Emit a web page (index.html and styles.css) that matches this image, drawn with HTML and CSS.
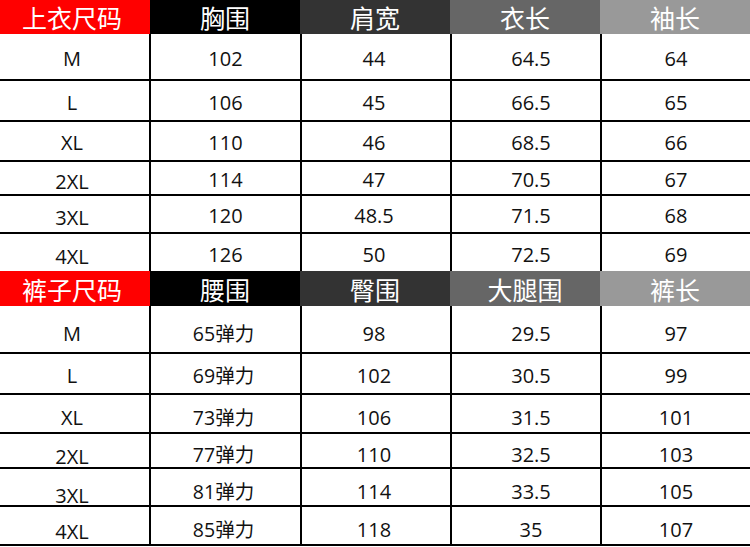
FILE: index.html
```html
<!DOCTYPE html>
<html lang="zh-CN">
<head>
<meta charset="utf-8">
<title>尺码表</title>
<link rel="stylesheet" href="styles.css">
</head>
<body>
<div class="chart">
  <section class="table top">
    <div class="row head">
      <div class="cell c1">上衣尺码</div>
      <div class="cell c2">胸围</div>
      <div class="cell c3">肩宽</div>
      <div class="cell c4">衣长</div>
      <div class="cell c5">袖长</div>
    </div>
    <div class="row data"><div class="cell c1">M</div><div class="cell c2">102</div><div class="cell c3">44</div><div class="cell c4">64.5</div><div class="cell c5">64</div></div>
    <div class="row data"><div class="cell c1">L</div><div class="cell c2">106</div><div class="cell c3">45</div><div class="cell c4">66.5</div><div class="cell c5">65</div></div>
    <div class="row data"><div class="cell c1">XL</div><div class="cell c2">110</div><div class="cell c3">46</div><div class="cell c4">68.5</div><div class="cell c5">66</div></div>
    <div class="row data"><div class="cell c1">2XL</div><div class="cell c2">114</div><div class="cell c3">47</div><div class="cell c4">70.5</div><div class="cell c5">67</div></div>
    <div class="row data"><div class="cell c1">3XL</div><div class="cell c2">120</div><div class="cell c3">48.5</div><div class="cell c4">71.5</div><div class="cell c5">68</div></div>
    <div class="row data"><div class="cell c1">4XL</div><div class="cell c2">126</div><div class="cell c3">50</div><div class="cell c4">72.5</div><div class="cell c5">69</div></div>
  </section>
  <section class="table bottom">
    <div class="row head">
      <div class="cell c1">裤子尺码</div>
      <div class="cell c2">腰围</div>
      <div class="cell c3">臀围</div>
      <div class="cell c4">大腿围</div>
      <div class="cell c5">裤长</div>
    </div>
    <div class="row data"><div class="cell c1">M</div><div class="cell c2">65弹力</div><div class="cell c3">98</div><div class="cell c4">29.5</div><div class="cell c5">97</div></div>
    <div class="row data"><div class="cell c1">L</div><div class="cell c2">69弹力</div><div class="cell c3">102</div><div class="cell c4">30.5</div><div class="cell c5">99</div></div>
    <div class="row data"><div class="cell c1">XL</div><div class="cell c2">73弹力</div><div class="cell c3">106</div><div class="cell c4">31.5</div><div class="cell c5">101</div></div>
    <div class="row data"><div class="cell c1">2XL</div><div class="cell c2">77弹力</div><div class="cell c3">110</div><div class="cell c4">32.5</div><div class="cell c5">103</div></div>
    <div class="row data"><div class="cell c1">3XL</div><div class="cell c2">81弹力</div><div class="cell c3">114</div><div class="cell c4">33.5</div><div class="cell c5">105</div></div>
    <div class="row data"><div class="cell c1">4XL</div><div class="cell c2">85弹力</div><div class="cell c3">118</div><div class="cell c4">35</div><div class="cell c5">107</div></div>
  </section>
</div>
</body>
</html>
```
FILE: styles.css
```css
html, body {
  margin: 0;
  padding: 0;
  background: #fff;
}

.chart {
  width: 750px;
  display: flex;
  flex-direction: column;
  font-family: "Open Sans", "Noto Sans CJK SC", sans-serif;
  color: #111;
}

.table {
  display: flex;
  flex-direction: column;
}

.row {
  display: grid;
  grid-template-columns: repeat(5, 150px);
  box-sizing: border-box;
}

.cell {
  display: flex;
  align-items: center;
  justify-content: center;
  box-sizing: border-box;
  white-space: nowrap;
}

/* header rows */
.head .cell {
  color: #fff;
  font-family: "Noto Sans CJK SC", sans-serif;
  font-size: 25px;
  line-height: 34px;
}
.head .c1 { background: #ff0000; padding-right: 6px; }
.head .c2 { background: #000000; }
.head .c3 { background: #333333; }
.head .c4 { background: #666666; }
.head .c5 { background: #999999; }

.top .head { height: 34px; }
.bottom .head { height: 35px; }

/* data rows */
.data .cell {
  font-size: 20px;
  line-height: 1;
  padding-top: 4px;
}
.data .c2,
.data .c3,
.data .c4,
.data .c5 {
  border-left: 2px solid #000;
}
.data .c2 { margin-left: -1px; }
.data .c1 { padding-right: 6px; }
.data .c3 { padding-right: 4px; }
.data .c4 { padding-left: 10px; }
.bottom .data .c2 { padding-right: 4px; font-size: 19.5px; }

.data + .data {
  border-top: 2px solid #000;
}

.top .data:nth-child(2) { height: 45px; }
.top .data:nth-child(3) { height: 41px; }
.top .data:nth-child(4) { height: 40px; }
.top .data:nth-child(5) { height: 34px; }
.top .data:nth-child(6) { height: 38px; }
.top .data:nth-child(7) { height: 39px; }

.bottom .data:nth-child(2) { height: 46px; }
.bottom .data:nth-child(3) { height: 41px; }
.bottom .data:nth-child(4) { height: 39px; }
.bottom .data:nth-child(5) { height: 35px; }
.bottom .data:nth-child(6) { height: 38px; }
.bottom .data:nth-child(7) { height: 41px; border-bottom: 2px solid #000; }

.top .data:nth-child(n+5) .c1 { padding-top: 8px; }

.bottom .data .cell { padding-top: 9px; }
.bottom .data:nth-child(3) .cell { padding-top: 5px; }
.bottom .data:nth-child(5) .c1,
.bottom .data:nth-child(7) .c1 { padding-top: 13px; }
.bottom .data:nth-child(6) .c1 { padding-top: 17px; }
```
